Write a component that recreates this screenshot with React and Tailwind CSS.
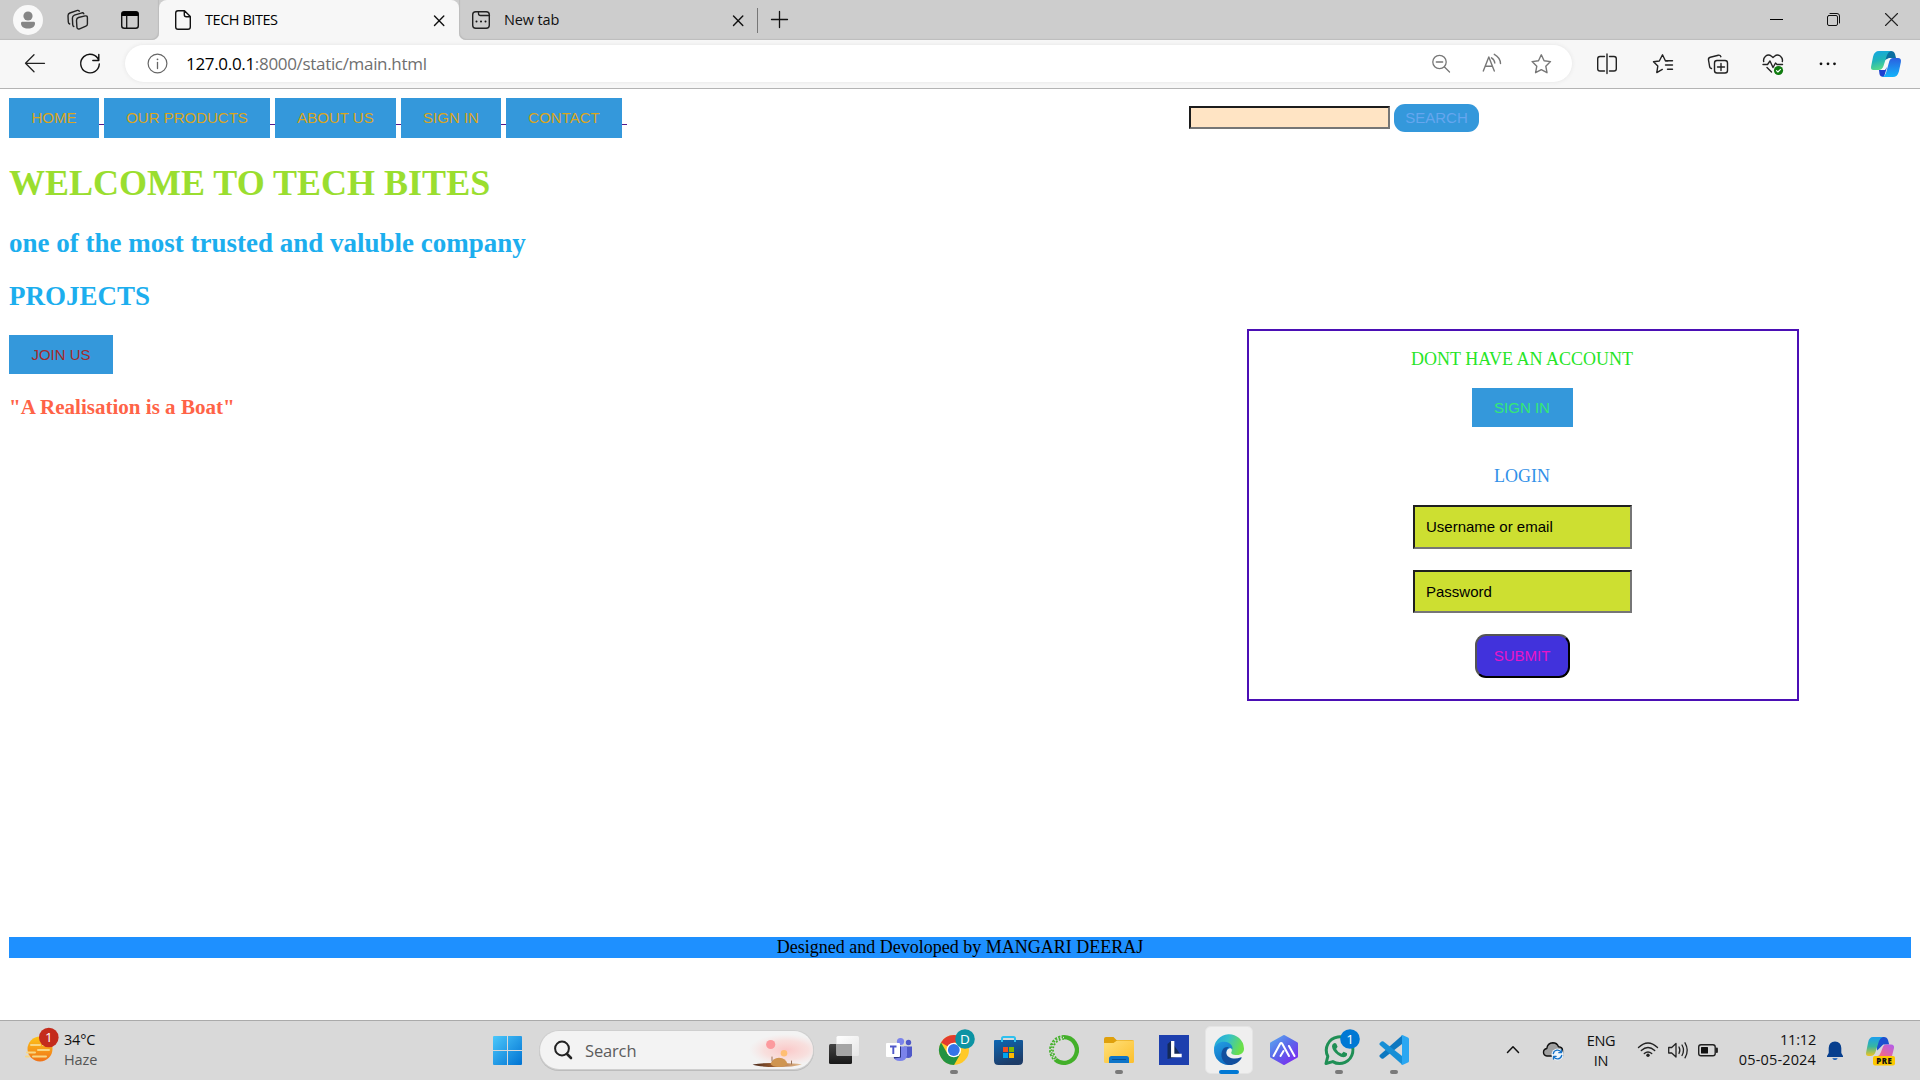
import React from 'react';

const Icon = ({ x, y = 0, w, h, className = '', children }) => (
  <svg
    width={w}
    height={h}
    viewBox={`${x} ${y} ${w} ${h}`}
    fill="none"
    strokeLinecap="round"
    strokeLinejoin="round"
    className={`block shrink-0 ${className}`}
  >
    {children}
  </svg>
);

const ui = "font-['Open_Sans','Noto_Sans',sans-serif]";

function TabBar() {
  return (
    <div className="flex h-10 bg-[#f7f7f7]">
      <div className="flex w-[159px] rounded-br-[7px] bg-[#cdcdcd] shadow-[inset_-1px_-1px_1px_#bdbdbd]">
        <Icon x={8} w={40} h={40} className="ml-2">
          <circle cx="28" cy="20" r="15" fill="#f8f8f8" />
          <circle cx="28" cy="16" r="4.6" fill="#868686" />
          <path d="M21 23.2q0-1.4 1.4-1.4h11.2q1.4 0 1.4 1.4c0 3.4-2.800 5.300-7 5.300s-7-1.900-7-5.300z" fill="#868686" />
        </Icon>
        <Icon x={60} w={36} h={40} className="ml-3">
          <g stroke="#222" strokeWidth="1.4">
            <path d="M78.500 17.500l6.600-1.600q2.300-.4 2.300 1.800v6.300q0 1.600-1.500 2.200l-6.300 2.600q-2.400.8-2.700-1.700l-.4-6.600q0-2.300 2-3z" />
            <path d="M73.800 26.500q-1-.4-1.100-2l-.3-6.500q0-2.100 2-2.900l7.600-2.300q1.300-.2 1.800 1" />
            <path d="M69.700 24q-1.300-.5-1.400-2l-.3-6.300q0-1.900 1.900-2.700l7.500-2.600q1.300-.3 1.900.8" />
          </g>
        </Icon>
        <Icon x={112} w={36} h={40} className="ml-4">
          <rect x="121.700" y="11.700" width="16.600" height="16.600" rx="2.500" stroke="#111" strokeWidth="1.400" />
          <path d="M121.500 16v-2q0-2.500 2.500-2.500h12q2.500 0 2.500 2.500v2z" fill="#000" />
          <path d="M126.700 16v12" stroke="#111" strokeWidth="1.300" />
        </Icon>
      </div>
      <div className="w-[300px] bg-[linear-gradient(#cdcdcd_50%,#f7f7f7_50%)]">
        <div className="flex h-10 items-center rounded-t-[8px] bg-[#f7f7f7]">
          <Icon x={171} w={24} h={40} className="ml-3">
            <path d="M178 10.700h6.500l5.800 5.800V27q0 2.300-2.300 2.300h-10q-2.300 0-2.300-2.300V13q0-2.300 2.300-2.300zM184.300 10.700v4q0 2 2 2h4" stroke="#111" strokeWidth="1.400" />
          </Icon>
          <span className={`${ui} ml-[10px] w-[215px] text-[14.500px] leading-10 tracking-[-0.450px] text-black`}>TECH BITES</span>
          <Icon x={429} w={20} h={40} className="ml-[9px]">
            <path d="M434.500 16l9.300 9.500M443.800 16l-9.300 9.500" stroke="#111" strokeWidth="1.400" />
          </Icon>
        </div>
      </div>
      <div className="flex flex-1 items-center rounded-bl-[7px] bg-[#cdcdcd] shadow-[inset_1px_-1px_1px_#bdbdbd]">
        <Icon x={468} w={26} h={40} className="ml-[9px]">
          <rect x="472.700" y="11.700" width="16.600" height="16.600" rx="3" stroke="#222" strokeWidth="1.400" />
          <path d="M478.500 12v1.500q0 2 2 2h9" stroke="#222" strokeWidth="1.300" />
          <path d="M476.500 21.500h.01M481 21.500h.01M485.500 21.500h.01" stroke="#111" strokeWidth="2" />
        </Icon>
        <span className={`${ui} ml-[10px] w-[215px] text-[14.500px] leading-10 tracking-[-0.150px] text-[#111]`}>New tab</span>
        <Icon x={728} w={20} h={40} className="ml-[9px]">
          <path d="M733.500 16l9.300 9.500M742.800 16l-9.300 9.500" stroke="#111" strokeWidth="1.400" />
        </Icon>
        <div className="ml-[9px] h-[25px] w-px bg-[#777]" />
        <Icon x={766} w={28} h={40} className="ml-2">
          <path d="M771.500 19.500h16M779.500 11.500v16" stroke="#111" strokeWidth="1.300" />
        </Icon>
        <Icon x={1764} w={26} h={40} className="ml-auto">
          <path d="M1770 19.500h13" stroke="#000" strokeLinecap="butt" />
        </Icon>
        <Icon x={1820} w={28} h={40} className="ml-[30px]">
          <rect x="1827.500" y="15.500" width="10" height="10" rx="1.500" stroke="#111" />
          <path d="M1830 13.500h7q2.500 0 2.500 2.500v7" stroke="#111" />
        </Icon>
        <Icon x={1878} w={42} h={40} className="ml-[30px]">
          <path d="M1885.500 13.500l12 12M1897.500 13.500l-12 12" stroke="#222" strokeWidth="1.100" />
        </Icon>
      </div>
    </div>
  );
}

function Toolbar() {
  return (
    <div className="flex h-[49px] items-start border-b border-[#b4b4b4] bg-[#f7f7f7]">
      <Icon x={20} y={40} w={30} h={48} className="ml-5">
        <path d="M44.500 63.300H25.500M34 54.800l-8.500 8.500 8.500 8.500" stroke="#222" strokeWidth="1.300" />
      </Icon>
      <Icon x={75} y={40} w={30} h={48} className="ml-[25px]">
        <path d="M98.800 60.500A9.300 9.300 0 1 0 99.300 64M98.800 54.500v6h-6" stroke="#111" strokeWidth="1.400" />
      </Icon>
      <div className="ml-5 mt-[5px] flex h-[37px] w-[1447px] items-center rounded-full bg-white shadow-[0_0_4px_#e4e4e4]">
        <Icon x={143} y={45} w={30} h={37} className="ml-[18px]">
          <circle cx="157.500" cy="63.500" r="9.400" stroke="#666" strokeWidth="1.200" />
          <path d="M157.500 62.500v6" stroke="#666" strokeWidth="1.300" />
          <circle cx="157.500" cy="59.300" r=".9" fill="#666" />
        </Icon>
        <span className={`${ui} ml-[13px] w-[300px] whitespace-nowrap text-[17px] leading-[37px] tracking-[-0.320px] text-[#6f6f6f]`}>
          <span className="text-black">127.0.0.1</span>:8000/static/main.html
        </span>
        <Icon x={1428} y={45} w={26} h={37} className="ml-auto">
          <g stroke="#777" strokeWidth="1.300">
            <circle cx="1439.500" cy="62" r="6.700" />
            <path d="M1436.300 62h6.400M1444.500 67l5 5" />
          </g>
        </Icon>
        <Icon x={1478} y={45} w={28} h={37} className="ml-6">
          <g stroke="#777" strokeWidth="1.400">
            <path d="M1483.300 71l5.500-14L1494.300 71M1485.300 66.300h7" />
            <path d="M1491.500 57.800q3 1.700 3.300 5.200M1494.300 54.300q6 3.200 6.200 9.200" />
          </g>
        </Icon>
        <Icon x={1526} y={45} w={46} h={37} className="ml-5">
          <path d="M1541.300 54.800l2.800 5.900 6.400.9-4.700 4.600 1.200 6.500-5.700-3.100-5.700 3.100 1.200-6.500-4.700-4.600 6.400-.9z" stroke="#777" strokeWidth="1.400" />
        </Icon>
      </div>
      <Icon x={1592} y={40} w={30} h={48} className="ml-5">
        <path d="M1604.500 56.500h-4.500q-2.300 0-2.300 2.300v9.900q0 2.300 2.300 2.300h4.500M1609.500 56.500h4.500q2.300 0 2.300 2.300v9.900q0 2.300-2.300 2.300h-4.500M1607 54v19.500" stroke="#222" strokeWidth="1.400" />
      </Icon>
      <Icon x={1648} y={40} w={30} h={48} className="ml-[26px]">
        <path d="M1668 61h-2.500l-3-6.200-3.200 6.200-5.800.7 4.300 4.400-1 6.500 5.500-3.200M1665.500 60.700h7M1665.500 65h7M1667.500 69.200h5" stroke="#222" strokeWidth="1.400" />
      </Icon>
      <Icon x={1703} y={40} w={30} h={48} className="ml-[25px]">
        <g stroke="#222" strokeWidth="1.400">
          <rect x="1714.500" y="60.500" width="13" height="12.500" rx="2.500" />
          <path d="M1721 63.500v7M1717.500 67h7M1711.500 68.500q-1.500-.3-1.800-1.500l-1.200-7q-.4-2.300 1.800-2.800l8-2q2-.3 2.600 1.500" />
        </g>
      </Icon>
      <Icon x={1758} y={40} w={30} h={48} className="ml-[25px]">
        <path d="M1763.700 61.500q-.7-3 1.800-5.300 3-2.300 6 0l1.500 1.400 1.500-1.400q3-2.300 6 0 2.600 2.300 1.800 5.300M1763 64.500h4.500l2.500-3.500 3 6.500 2.500-4.500 1.500 1.500h5.500M1767 67.500l4.500 4.500" stroke="#222" strokeWidth="1.400" />
        <circle cx="1778.500" cy="70.500" r="4.600" fill="#107c10" />
        <path d="M1776.500 70.700l1.400 1.300 2.600-2.700" stroke="#fff" strokeWidth="1.100" />
      </Icon>
      <Icon x={1814} y={40} w={28} h={48} className="ml-[26px]">
        <path d="M1821 63.800h.01M1828 63.800h.01M1834.500 63.800h.01" stroke="#111" strokeWidth="2.800" />
      </Icon>
      <Icon x={1866} y={40} w={40} h={48} className="ml-6">
        <defs>
          <linearGradient id="ca" x1="0" y1="0" x2=".3" y2="1">
            <stop stopColor="#12a5e6" />
            <stop offset=".55" stopColor="#21b4b8" />
            <stop offset="1" stopColor="#56d98a" />
          </linearGradient>
          <linearGradient id="cb" x1="0" y1="0" x2="0" y2="1">
            <stop stopColor="#2b5fe0" />
            <stop offset="1" stopColor="#12b4fa" />
          </linearGradient>
        </defs>
        <path d="M1880 51h11q3 0 4 3l1 4h-7l-6 3z" fill="#0b6fa0" />
        <path d="M1879 51h12q-3 .8-4 4l-3.500 11q-1.300 4-5 4h-5q-3 0-2.400-3.500l2-10Q1874.500 51 1879 51z" fill="url(#ca)" />
        <path d="M1879 70h6l2-3-3 10q-4 0-4.500-3z" fill="#1a3fd0" />
        <path d="M1893 58h5q3.500 0 2.900 4l-2 9.500q-1.400 5.500-6 5.500H1882q3-.8 4-4l3.200-11.500q1-3.500 3.800-3.500z" fill="url(#cb)" />
      </Icon>
    </div>
  );
}

const blueButton = "h-10 bg-[#3498db] text-center font-['Liberation_Sans',Arial,sans-serif] text-[15px] leading-[40px]";

const navItems = [
  { label: 'HOME', width: 'w-[90px]' },
  { label: 'OUR PRODUCTS', width: 'w-[166px]' },
  { label: 'ABOUT US', width: 'w-[121px]' },
  { label: 'SIGN IN', width: 'w-[100px]' },
  { label: 'CONTACT', width: 'w-[116px]' },
];

function Page() {
  return (
    <div className="flex h-[931px] flex-col bg-white px-[9px] font-['Liberation_Serif','Times_New_Roman',serif] text-[18px]">
      <div className="mt-[9px] flex h-10">
        {navItems.map((item) => (
          <div key={item.label} className="flex">
            <button className={`${blueButton} ${item.width} text-[#daa520]`}>{item.label}</button>
            <div className="mt-[26px] h-px w-[5px] bg-[#551a8b]" />
          </div>
        ))}
        <div className="ml-[562px] mt-2 h-[23px] w-[201px] border-2 border-b-[#767676] border-l-[#1c1c1c] border-r-[#767676] border-t-[#1c1c1c] bg-[#ffe4c4]" />
        <button className="ml-1 mt-[6px] h-7 w-[85px] rounded-[11px] bg-[#3498db] font-['Liberation_Sans',Arial,sans-serif] text-[15px] leading-7 text-[#66a6ee]">SEARCH</button>
      </div>
      <div className="flex h-[799px] justify-between">
        <div>
          <h1 className="mt-[25px] text-[36px] font-bold leading-[41px] text-[#9ade2f]">WELCOME TO TECH BITES</h1>
          <h2 className="mt-[24px] text-[27px] font-bold leading-[31px] text-[#1caeee]">one of the most trusted and valuble company</h2>
          <h2 className="mt-[22px] text-[27px] font-bold leading-[31px] text-[#1caeee]">PROJECTS</h2>
          <button className="mt-[23px] block h-[39px] w-[104px] bg-[#3498db] font-['Liberation_Sans',Arial,sans-serif] text-[15px] leading-[39px] text-[#a52a2a]">JOIN US</button>
          <h3 className="mt-[21px] text-[21.060px] font-bold leading-6 text-[#ff6347]">"A Realisation is a Boat"</h3>
        </div>
        <div className="mr-[112px] mt-[191px] flex h-[372px] w-[552px] flex-col items-center border-2 border-[#4b0fb5] pr-0.5">
          <p className="mt-[18px] leading-[21px] text-[#26e526]">DONT HAVE AN ACCOUNT</p>
          <button className="mt-[18px] h-[39px] w-[101px] bg-[#3498db] font-['Liberation_Sans',Arial,sans-serif] text-[15px] leading-[39px] text-[#35e874]">SIGN IN</button>
          <p className="mt-[39px] leading-[21px] text-[#3190e8]">LOGIN</p>
          <div className="mt-[18px] h-11 w-[219px] border-2 border-b-[#767676] border-l-[#1f1f1f] border-r-[#767676] border-t-[#1f1f1f] bg-[#cddf31] pl-[11.500px] font-['Liberation_Sans',Arial,sans-serif] text-[15px] leading-10 text-black">Username or email</div>
          <div className="mt-[21px] h-[43px] w-[219px] border-2 border-b-[#767676] border-l-[#1f1f1f] border-r-[#767676] border-t-[#1f1f1f] bg-[#cddf31] pl-[11.500px] font-['Liberation_Sans',Arial,sans-serif] text-[15px] leading-[39px] text-black">Password</div>
          <button className="mt-[21px] h-11 w-[95px] rounded-[11px] border-2 border-b-black border-l-[#555] border-r-black border-t-[#555] bg-[#4132dc] font-['Liberation_Sans',Arial,sans-serif] text-[15px] leading-10 text-[#e815c8]">SUBMIT</button>
        </div>
      </div>
      <div className="h-[21px] bg-[#1e90ff] text-center leading-[21px] text-black">Designed and Devoloped by MANGARI DEERAJ</div>
    </div>
  );
}

const Running = ({ cx }) => <rect x={cx - 4} y="1070" width="8" height="4" rx="2" fill="#7a7a7a" />;

const Badge = ({ cx, cy, fill, children }) => (
  <>
    <circle cx={cx} cy={cy} r="9.800" fill={fill} />
    <text x={cx} y={cy + 4.9} textAnchor="middle" fontSize="13.5" fontWeight="500" fill="#fff" className={ui}>{children}</text>
  </>
);

const AppSlot = ({ i, children }) => (
  <Icon x={816 + i * 55} y={1020} w={55} h={60}>{children}</Icon>
);

function Apps() {
  return (
    <>
      <AppSlot i={0}>
        <defs>
          <linearGradient id="tv1" x1="0" y1="0" x2="0" y2="1"><stop stopColor="#444" /><stop offset="1" stopColor="#181818" /></linearGradient>
          <linearGradient id="tv2" x1="0" y1="0" x2="1" y2="1"><stop stopColor="#fff" /><stop offset="1" stopColor="#e6e6e6" /></linearGradient>
        </defs>
        <rect x="829" y="1044" width="23" height="20" rx="1.500" fill="url(#tv1)" />
        <rect x="836.500" y="1036" width="22.500" height="20" rx="1.500" fill="url(#tv2)" />
        <path d="M836.500 1044H852v12h-14q-1.500 0-1.500-1.500z" fill="#a5a5a5" />
      </AppSlot>
      <AppSlot i={1}>
        <circle cx="900.500" cy="1041.500" r="3.600" fill="#7b83eb" />
        <circle cx="908.500" cy="1042.500" r="2.700" fill="#5059c9" />
        <path d="M904 1046.500h8v9q-1 2.500-3.500 2.500t-4.500-1z" fill="#5059c9" />
        <path d="M893 1046.500h14v9q-1 5.500-7 5.500t-7-5.500z" fill="#7b83eb" />
        <path d="M901 1046.500v11l-7 1v-12z" fill="#2c3380" />
        <rect x="886" y="1043" width="14" height="14" rx="1" fill="#fff" />
        <path d="M890 1046.500h6.500M893.300 1046.500v7.500" stroke="#5059c9" strokeWidth="1.900" strokeLinecap="butt" />
      </AppSlot>
      <AppSlot i={2}>
        <circle cx="954" cy="1050" r="15" fill="#ffc928" />
        <path d="M954 1050L941 1042.500A15 15 0 0 1 967 1042.500H954z" fill="#e33b2e" />
        <path d="M941 1042.500A15 15 0 0 0 954 1065L960.500 1053.700L947.500 1053.700z" fill="#229342" />
        <circle cx="953.800" cy="1050" r="7.300" fill="#fff" />
        <circle cx="953.800" cy="1050" r="5.900" fill="#3474e8" />
        <Badge cx={965} cy={1039} fill="#0c93a3">D</Badge>
        <Running cx={954} />
      </AppSlot>
      <AppSlot i={3}>
        <defs>
          <linearGradient id="st" x1="0" y1="0" x2=".4" y2="1"><stop stopColor="#0d67b4" /><stop offset="1" stopColor="#1d3c68" /></linearGradient>
        </defs>
        <path d="M1002 1041v-2.500q0-1.500 1.500-1.500h10q1.500 0 1.500 1.500v2.500" stroke="#2ec0ee" strokeWidth="2" />
        <path d="M994 1041q0-1 1-1h27q1 0 1 1v19.500q0 4.500-4.500 4.500h-20q-4.500 0-4.500-4.500z" fill="url(#st)" />
        <path d="M1002 1040v2M1015 1040v2" stroke="#2ec0ee" strokeWidth="2" strokeLinecap="butt" />
        <rect x="1003" y="1047" width="5" height="5" fill="#f25022" />
        <rect x="1009" y="1047" width="5" height="5" fill="#7fba00" />
        <rect x="1003" y="1053" width="5" height="5" fill="#00a4ef" />
        <rect x="1009" y="1053" width="5" height="5" fill="#ffb900" />
      </AppSlot>
      <AppSlot i={4}>
        <path d="M1064 1037.100A12.900 12.900 0 1 1 1055.500 1059.700" stroke="#43b02a" strokeWidth="4.300" strokeLinecap="butt" />
        <g strokeLinecap="butt" stroke="#43b02a">
          <path d="M1064 1035.900A14.100 14.100 0 0 0 1054.700 1060.600" strokeWidth="1.700" strokeDasharray="2.400 1.300" />
          <path d="M1063 1037.400A12.600 12.600 0 0 0 1055.700 1059.400" strokeWidth="1.500" strokeDasharray="1.500 1.500" />
          <path d="M1064 1039A11 11 0 0 0 1056.800 1058.300" strokeWidth="1.700" strokeDasharray="1.800 1.600" />
        </g>
      </AppSlot>
      <AppSlot i={5}>
        <defs>
          <linearGradient id="fo" x1="0" y1="0" x2="1" y2="1"><stop stopColor="#ffe07a" /><stop offset="1" stopColor="#fcbf2c" /></linearGradient>
        </defs>
        <path d="M1104 1039q0-2 2-2h7.500l3 3h15.500q2 0 2 2v4h-30z" fill="#dfa00c" />
        <path d="M1104 1043h9.500l3.500-2.500h16q1 0 1 1v20q0 1.500-1.500 1.500h-27q-1.500 0-1.500-1.500z" fill="url(#fo)" />
        <path d="M1109 1063v-4.500q0-2.500 2.500-2.500h15q2.500 0 2.500 2.500v4.500z" fill="#0d74c8" />
        <path d="M1112.500 1059.500h13" stroke="#074f92" strokeWidth="1.200" />
        <Running cx={1119} />
      </AppSlot>
      <AppSlot i={6}>
        <rect x="1159" y="1035" width="30" height="30" fill="#1d3fae" />
        <path d="M1171 1041l-3.500 3v15l14-3z" fill="#142a57" />
        <path d="M1172.700 1041v14.500h9" stroke="#fff" strokeWidth="3.300" strokeLinecap="butt" strokeLinejoin="miter" />
      </AppSlot>
      <AppSlot i={7}>
        <defs>
          <linearGradient id="eg1" x1="0" y1="0" x2="1" y2=".3"><stop stopColor="#1fa2e0" /><stop offset=".5" stopColor="#35c1c8" /><stop offset="1" stopColor="#6be04a" /></linearGradient>
          <linearGradient id="eg2" x1="0" y1="0" x2=".6" y2="1"><stop stopColor="#24a0e4" /><stop offset="1" stopColor="#0b67bd" /></linearGradient>
        </defs>
        <rect x="1205.500" y="1026.500" width="47" height="47" rx="5" fill="#efefef" stroke="#e4e4e4" />
        <path d="M1214 1050a15 15 0 0 1 30-1.500c.2 4-3 6.500-7 6.500-5 0-6.500-1.500-5.500-3.200 1-1.500.2-4.800-4.500-6.300-6-1.500-11 1-13 4.500z" fill="url(#eg1)" />
        <path d="M1214 1050c.5-6 6-8.500 10.500-8.300 5 .3 8.500 4 8 7.300-3-2-7 1-6.300 5.500.8 5 6.300 8 12.300 6a15 15 0 0 1-9.500 4.500c-8 .3-15.200-6.500-15-15z" fill="url(#eg2)" />
        <path d="M1223 1049c-4 6.500 0 14.500 6 16 5 .2 10-2.500 12.500-6.800.5-1-.3-1.200-1-.8-6 2.600-14 .6-14.300-5 0-2.500 1.300-4.500 2.800-5.200-2.500-.7-4.700.2-6 1.800z" fill="#124f9e" />
        <rect x="1219" y="1070" width="20" height="4" rx="2" fill="#0078d4" />
      </AppSlot>
      <AppSlot i={8}>
        <defs>
          <linearGradient id="hx" x1="0" y1="0" x2=".8" y2="1"><stop stopColor="#5ba8f0" /><stop offset=".5" stopColor="#5a68ea" /><stop offset="1" stopColor="#7a2ff0" /></linearGradient>
        </defs>
        <path d="M1284 1036.500l12.500 7v13L1284 1063.500l-12.500-7v-13z" fill="url(#hx)" stroke="url(#hx)" strokeWidth="3" />
        <path d="M1273.500 1056l6.500-12q1.200-2 2.400 0l6.600 12M1280.500 1056l3-5M1289 1046l5.500 10" stroke="#fff" strokeWidth="2" />
      </AppSlot>
      <AppSlot i={9}>
        <path d="M1326 1063.500l1.800-7.200a13.300 13.300 0 1 1 5 5.300z" stroke="#1f8f55" strokeWidth="3" />
        <path d="M1333.500 1043.500q1.500-1.300 2.800.2l1.300 3-1.500 2.200q1.700 3.500 5.500 4.800l2-2 3.400 1.600q.8 2.200-1.500 3.400-3 1.500-7.500-1.700-5.500-4-6-8.500-.1-1.800 1.500-3z" fill="#1f8f55" />
        <Badge cx={1350} cy={1039} fill="#0078d4">1</Badge>
        <Running cx={1339} />
      </AppSlot>
      <AppSlot i={10}>
        <path d="M1402 1035.500v8.500l-18.500 14.500q-1 .7-2 0l-1.700-1.500q-1-1 0-2z" fill="#0e78c0" />
        <path d="M1402 1064.500v-8.500l-18.500-14.500q-1-.7-2 0l-1.700 1.500q-1 1 0 2z" fill="#168fd6" />
        <path d="M1401 1035.500q.8-.7 2-.3l5 2.300q1 .5 1 1.600v21.800q0 1.100-1 1.600l-5 2.300q-1.200.4-2-.3 1 .2 1-1.500v-26q0-1.700-1-1.500z" fill="#2aa7f2" />
        <Running cx={1394} />
      </AppSlot>
    </>
  );
}

function Taskbar() {
  return (
    <div className={`${ui} flex h-[60px] border-t border-[#aaa] bg-[#d9d9d9]`}>
      <div className="-mt-px flex h-[60px] w-[1920px]">
        <Icon x={20} y={1020} w={44} h={60} className="ml-5">
          <defs>
            <linearGradient id="sun" x1="0" y1="0" x2="0" y2="1"><stop stopColor="#fcc419" /><stop offset="1" stopColor="#f0721a" /></linearGradient>
          </defs>
          <circle cx="40" cy="1049" r="12.500" fill="url(#sun)" />
          <path d="M31 1045h9M38 1050h11M27 1052.500h8M33 1056.500h13M26 1056.500h3M43 1045h6" stroke="#f8d784" strokeWidth="2" />
          <Badge cx={48.8} cy={1037.5} fill="#c42b1c">1</Badge>
        </Icon>
        <div className="mt-[10px] w-[100px] text-[14.500px] leading-5 tracking-[-0.200px]">
          <div className="text-[#111]">34°C</div>
          <div className="text-[#555] tracking-[-0.100px]">Haze</div>
        </div>
        <Icon x={480} y={1020} w={55} h={60} className="ml-[316px]">
          <defs>
            <linearGradient id="win" x1="0" y1="0" x2="1" y2="1"><stop stopColor="#4cc8fb" /><stop offset="1" stopColor="#0072d2" /></linearGradient>
          </defs>
          <path d="M494 1036h13v14h-14v-13q0-1 1-1zM508 1036h13q1 0 1 1v13h-14zM493 1051h14v14h-13q-1 0-1-1zM508 1051h14v13q0 1-1 1h-13z" fill="url(#win)" />
        </Icon>
        <div className="ml-[5px] mt-[11px] flex h-[38px] w-[273px] items-center overflow-hidden rounded-full bg-[#f3f3f3] shadow-[0_0_0_1px_#cfcfcf,0_1px_0_1px_#bcbcbc]">
          <Icon x={550} y={1031} w={26} h={38} className="ml-[10px]">
            <circle cx="562" cy="1048.500" r="6.900" stroke="#222" strokeWidth="2" />
            <path d="M567 1054l4 4" stroke="#222" strokeWidth="2.600" />
          </Icon>
          <span className="ml-[9px] mt-[2px] w-[155px] text-[16.500px] leading-[38px] tracking-[-0.150px] text-[#5c5c5c]">Search</span>
          <Icon x={740} y={1031} w={73} h={38}>
            <defs>
              <radialGradient id="glow"><stop stopColor="#fcc0c0" stopOpacity=".85" /><stop offset=".6" stopColor="#fbd2cf" stopOpacity=".6" /><stop offset="1" stopColor="#f8dede" stopOpacity="0" /></radialGradient>
              <linearGradient id="sand"><stop stopColor="#4a2a1c" /><stop offset=".5" stopColor="#a86634" /><stop offset="1" stopColor="#e8c49a" /></linearGradient>
            </defs>
            <ellipse cx="786" cy="1050" rx="37" ry="16" fill="url(#glow)" />
            <circle cx="770.700" cy="1044.500" r="4.600" fill="#fc9a9e" />
            <circle cx="784" cy="1053.300" r="3.300" fill="#ffbf74" />
            <path d="M752.500 1064.500q12-2 25-1.500 15-.3 24.500 1.500-8 2.500-26 2.500-17 0-23.500-2.500z" fill="url(#sand)" />
            <path d="M770.500 1064q2-6 8.500-6.300 7 .3 8.500 6.300-2 3-8.500 3t-8.500-3z" fill="#cf9550" />
            <path d="M772 1057v4M791.500 1061v3" stroke="#9c7358" />
          </Icon>
        </div>
        <div className="ml-[3px] flex">
          <Apps />
        </div>
        <Icon x={1500} y={1020} w={26} h={60} className="ml-[79px]">
          <path d="M1507.500 1052.500l5.500-5.700 5.500 5.700" stroke="#111" strokeWidth="1.500" />
        </Icon>
        <Icon x={1538} y={1020} w={32} h={60} className="ml-3">
          <path d="M1547 1056q-3.500-.5-3.500-3.700 0-3.200 3.300-3.800.7-5.500 6-5.800 4.200 0 5.700 4 4 .3 4 3.500v5.800z" fill="#a0a0a0" stroke="#111" strokeWidth="1.400" />
          <circle cx="1557.500" cy="1054.500" r="6" fill="#eef5fb" />
          <path d="M1553.300 1053.500a4.300 4.300 0 0 1 8-1M1561.700 1055.500a4.300 4.300 0 0 1-8 1M1561.500 1050v2.700h-2.700M1553.500 1059v-2.700h2.700" stroke="#1673c8" strokeWidth="1.300" />
        </Icon>
        <div className="ml-[11px] mt-[11px] w-10 text-center text-[14.500px] leading-5 tracking-[-0.300px] text-[#111]">
          <div>ENG</div>
          <div>IN</div>
        </div>
        <Icon x={1634} y={1020} w={28} h={60} className="ml-[13px]">
          <g stroke="#222" strokeWidth="1.400">
            <path d="M1638.500 1047.500q9.500-9 19 0M1641.300 1050.500q6.700-6.200 13.400 0M1644.300 1053.500q3.700-3.200 7.400 0" />
          </g>
          <circle cx="1648" cy="1055.300" r="1.700" fill="#222" />
        </Icon>
        <Icon x={1664} y={1020} w={28} h={60} className="ml-[2px]">
          <path d="M1668.700 1047.500h3l4.300-4v13.500l-4.300-4h-3zM1679 1047q1.700 3.200 0 6.500M1682 1045q3 5.200 0 10.500M1685 1042.800q4.500 7.500 0 15" stroke="#222" strokeWidth="1.300" />
        </Icon>
        <Icon x={1694} y={1020} w={28} h={60} className="ml-[2px]">
          <rect x="1698.700" y="1044.700" width="16.500" height="11" rx="2.300" stroke="#222" strokeWidth="1.400" />
          <rect x="1701" y="1047" width="7" height="6.500" rx=".5" fill="#111" />
          <path d="M1716.800 1048.500v3.500" stroke="#222" strokeWidth="2.200" />
        </Icon>
        <div className="mt-[10px] w-[94px] text-right text-[14.500px] leading-5 text-[#111]">
          <div className="tracking-[-0.200px]">11:12</div>
          <div className="tracking-[0.150px]">05-05-2024</div>
        </div>
        <Icon x={1822} y={1020} w={26} h={60} className="ml-[6px]">
          <path d="M1835 1041.500q6 .3 6.300 6.500v5l1.700 3v1h-16v-1l1.700-3v-5q.3-6.200 6.300-6.500z" fill="#073f8e" />
          <path d="M1832.300 1058.300h5.400q-.6 1.800-2.700 1.800t-2.700-1.800z" fill="#0a57b8" />
        </Icon>
        <Icon x={1860} y={1020} w={40} h={60} className="ml-3">
          <defs>
            <linearGradient id="pa" x1="0" y1="0" x2="0" y2="1"><stop stopColor="#1a9fee" /><stop offset=".5" stopColor="#37b7a0" /><stop offset="1" stopColor="#f0c420" /></linearGradient>
            <linearGradient id="pb" x1="1" y1="0" x2="0" y2="1"><stop stopColor="#b05cf0" /><stop offset="1" stopColor="#fb6a7a" /></linearGradient>
          </defs>
          <path d="M1876 1037h8q3 0 4 3l1.200 4.500h-6l-6 6z" fill="#1c50d0" />
          <path d="M1873 1037h10q-3 .8-4 4l-3.500 11q-1.300 4-5 4h-2q-3 0-2.400-3.500l2-10q1-5.500 4.900-5.500z" fill="url(#pa)" />
          <path d="M1886 1044.500h5q3.500 0 3 3.500l-2 8h-14q2-1 3-4l1.500-4q1-3.500 3.500-3.500z" fill="url(#pb)" />
          <rect x="1873" y="1056" width="22" height="9.500" rx="2" fill="#fcc800" />
          <text x="1884.200" y="1063.700" textAnchor="middle" fontSize="7.800" fontWeight="800" letterSpacing=".5" fill="#111" className={ui}>PRE</text>
        </Icon>
      </div>
    </div>
  );
}

export default function App() {
  return (
    <div className="flex h-[1080px] w-[1920px] flex-col overflow-hidden bg-white">
      <TabBar />
      <Toolbar />
      <Page />
      <Taskbar />
    </div>
  );
}
